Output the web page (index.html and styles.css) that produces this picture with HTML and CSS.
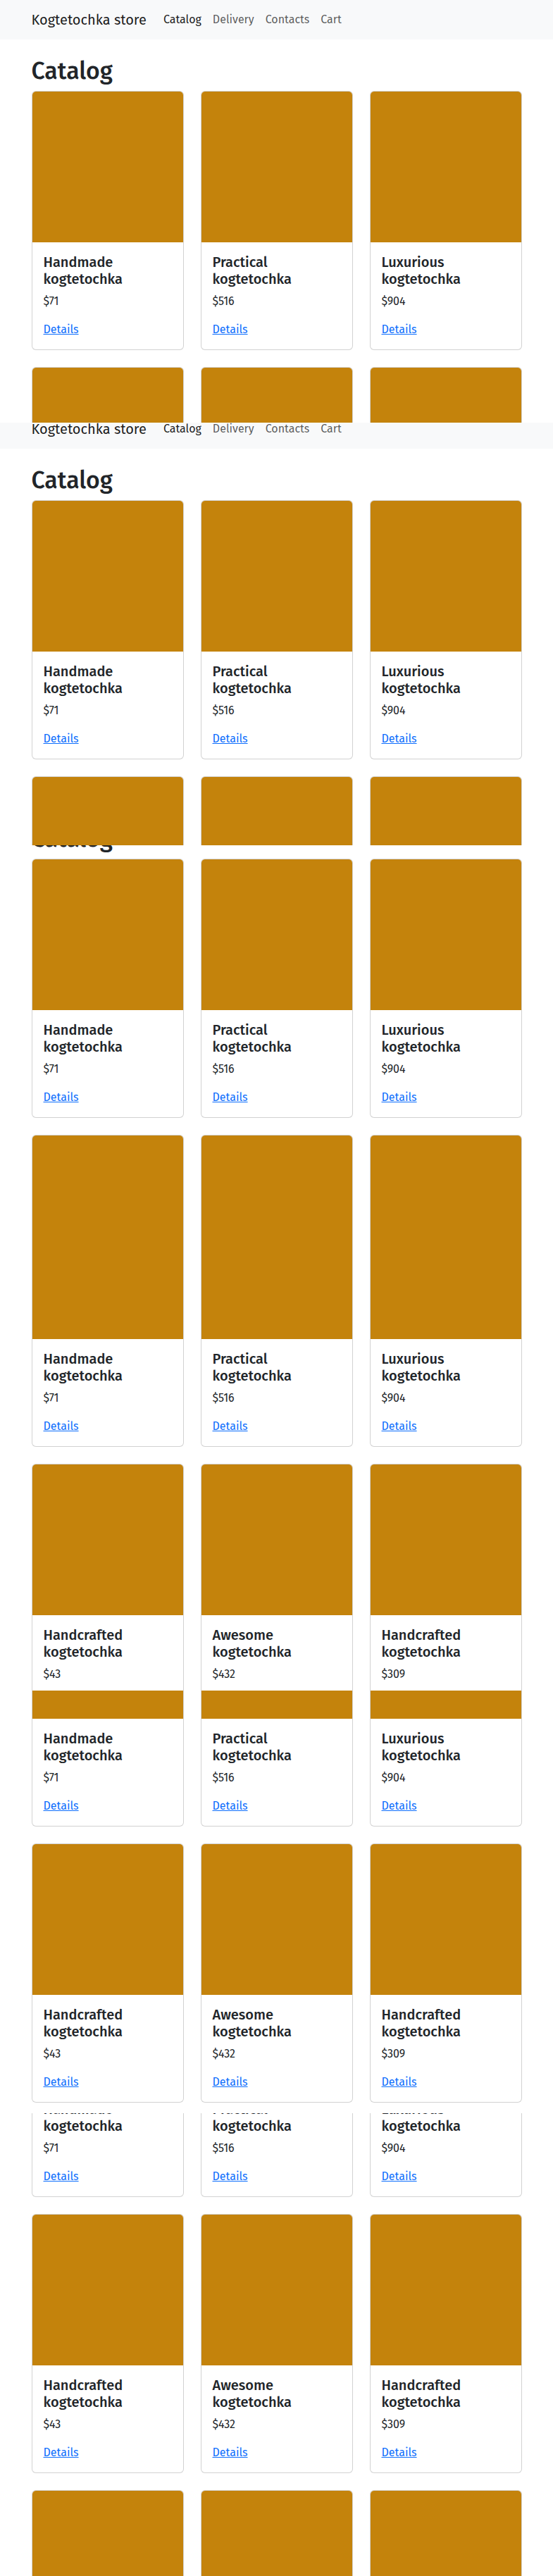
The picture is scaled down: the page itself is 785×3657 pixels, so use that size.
FILE: index.html
```html
<!DOCTYPE html>
<html lang="en">
<head>
<meta charset="utf-8">
<title>Catalog — Kogtetochka store</title>
<link rel="stylesheet" href="styles.css">
</head>
<body>

<!-- capture 1 : page from top -->
<section class="strip">
  <div class="page">
    <nav class="navbar">
      <div class="container nav-inner">
        <a class="brand" href="#">Kogtetochka store</a>
        <ul class="nav-links">
          <li><a class="nav-link active" href="#">Catalog</a></li>
          <li><a class="nav-link" href="#">Delivery</a></li>
          <li><a class="nav-link" href="#">Contacts</a></li>
          <li><a class="nav-link" href="#">Cart</a></li>
        </ul>
      </div>
    </nav>
    <main class="container main">
      <h1 class="title">Catalog</h1>
      <div class="grid">
        <div class="card"><div class="card-img"></div><div class="card-body"><h5 class="card-title">Handmade kogtetochka</h5><p class="price">$71</p><a class="details" href="#">Details</a></div></div>
        <div class="card"><div class="card-img"></div><div class="card-body"><h5 class="card-title">Practical kogtetochka</h5><p class="price">$516</p><a class="details" href="#">Details</a></div></div>
        <div class="card"><div class="card-img"></div><div class="card-body"><h5 class="card-title">Luxurious kogtetochka</h5><p class="price">$904</p><a class="details" href="#">Details</a></div></div>
        <div class="card"><div class="card-img"></div></div>
        <div class="card"><div class="card-img"></div></div>
        <div class="card"><div class="card-img"></div></div>
      </div>
    </main>
  </div>
</section>

<!-- capture 2 -->
<section class="strip s2">
  <div class="page">
    <nav class="navbar">
      <div class="container nav-inner">
        <a class="brand" href="#">Kogtetochka store</a>
        <ul class="nav-links">
          <li><a class="nav-link active" href="#">Catalog</a></li>
          <li><a class="nav-link" href="#">Delivery</a></li>
          <li><a class="nav-link" href="#">Contacts</a></li>
          <li><a class="nav-link" href="#">Cart</a></li>
        </ul>
      </div>
    </nav>
    <main class="container main">
      <h1 class="title">Catalog</h1>
      <div class="grid">
        <div class="card"><div class="card-img"></div><div class="card-body"><h5 class="card-title">Handmade kogtetochka</h5><p class="price">$71</p><a class="details" href="#">Details</a></div></div>
        <div class="card"><div class="card-img"></div><div class="card-body"><h5 class="card-title">Practical kogtetochka</h5><p class="price">$516</p><a class="details" href="#">Details</a></div></div>
        <div class="card"><div class="card-img"></div><div class="card-body"><h5 class="card-title">Luxurious kogtetochka</h5><p class="price">$904</p><a class="details" href="#">Details</a></div></div>
        <div class="card"><div class="card-img"></div></div>
        <div class="card"><div class="card-img"></div></div>
        <div class="card"><div class="card-img"></div></div>
      </div>
    </main>
  </div>
</section>

<!-- capture 3 -->
<section class="strip s3">
  <div class="page">
    <main class="container main-cut">
      <h1 class="title">Catalog</h1>
      <div class="grid">
        <div class="card"><div class="card-img"></div><div class="card-body"><h5 class="card-title">Handmade kogtetochka</h5><p class="price">$71</p><a class="details" href="#">Details</a></div></div>
        <div class="card"><div class="card-img"></div><div class="card-body"><h5 class="card-title">Practical kogtetochka</h5><p class="price">$516</p><a class="details" href="#">Details</a></div></div>
        <div class="card"><div class="card-img"></div><div class="card-body"><h5 class="card-title">Luxurious kogtetochka</h5><p class="price">$904</p><a class="details" href="#">Details</a></div></div>
        <div class="card"><div class="card-img"></div></div>
        <div class="card"><div class="card-img"></div></div>
        <div class="card"><div class="card-img"></div></div>
      </div>
    </main>
  </div>
</section>

<!-- capture 4 -->
<section class="strip s4">
  <div class="page">
    <main class="container main-cut">
      <div class="grid">
        <div class="card"><div class="card-img"></div><div class="card-body"><h5 class="card-title">Handmade kogtetochka</h5><p class="price">$71</p><a class="details" href="#">Details</a></div></div>
        <div class="card"><div class="card-img"></div><div class="card-body"><h5 class="card-title">Practical kogtetochka</h5><p class="price">$516</p><a class="details" href="#">Details</a></div></div>
        <div class="card"><div class="card-img"></div><div class="card-body"><h5 class="card-title">Luxurious kogtetochka</h5><p class="price">$904</p><a class="details" href="#">Details</a></div></div>
        <div class="card"><div class="card-img"></div><div class="card-body"><h5 class="card-title">Handcrafted kogtetochka</h5><p class="price">$43</p></div></div>
        <div class="card"><div class="card-img"></div><div class="card-body"><h5 class="card-title">Awesome kogtetochka</h5><p class="price">$432</p></div></div>
        <div class="card"><div class="card-img"></div><div class="card-body"><h5 class="card-title">Handcrafted kogtetochka</h5><p class="price">$309</p></div></div>
      </div>
    </main>
  </div>
</section>

<!-- capture 5 -->
<section class="strip s5">
  <div class="page">
    <main class="container main-cut">
      <div class="grid">
        <div class="card"><div class="card-img"></div><div class="card-body"><h5 class="card-title">Handmade kogtetochka</h5><p class="price">$71</p><a class="details" href="#">Details</a></div></div>
        <div class="card"><div class="card-img"></div><div class="card-body"><h5 class="card-title">Practical kogtetochka</h5><p class="price">$516</p><a class="details" href="#">Details</a></div></div>
        <div class="card"><div class="card-img"></div><div class="card-body"><h5 class="card-title">Luxurious kogtetochka</h5><p class="price">$904</p><a class="details" href="#">Details</a></div></div>
        <div class="card"><div class="card-img"></div><div class="card-body"><h5 class="card-title">Handcrafted kogtetochka</h5><p class="price">$43</p><a class="details" href="#">Details</a></div></div>
        <div class="card"><div class="card-img"></div><div class="card-body"><h5 class="card-title">Awesome kogtetochka</h5><p class="price">$432</p><a class="details" href="#">Details</a></div></div>
        <div class="card"><div class="card-img"></div><div class="card-body"><h5 class="card-title">Handcrafted kogtetochka</h5><p class="price">$309</p><a class="details" href="#">Details</a></div></div>
      </div>
    </main>
  </div>
</section>

<!-- capture 6 -->
<section class="strip s6">
  <div class="page">
    <main class="container main-cut">
      <div class="grid">
        <div class="card"><div class="card-img"></div><div class="card-body"><h5 class="card-title">Handmade kogtetochka</h5><p class="price">$71</p><a class="details" href="#">Details</a></div></div>
        <div class="card"><div class="card-img"></div><div class="card-body"><h5 class="card-title">Practical kogtetochka</h5><p class="price">$516</p><a class="details" href="#">Details</a></div></div>
        <div class="card"><div class="card-img"></div><div class="card-body"><h5 class="card-title">Luxurious kogtetochka</h5><p class="price">$904</p><a class="details" href="#">Details</a></div></div>
        <div class="card"><div class="card-img"></div><div class="card-body"><h5 class="card-title">Handcrafted kogtetochka</h5><p class="price">$43</p><a class="details" href="#">Details</a></div></div>
        <div class="card"><div class="card-img"></div><div class="card-body"><h5 class="card-title">Awesome kogtetochka</h5><p class="price">$432</p><a class="details" href="#">Details</a></div></div>
        <div class="card"><div class="card-img"></div><div class="card-body"><h5 class="card-title">Handcrafted kogtetochka</h5><p class="price">$309</p><a class="details" href="#">Details</a></div></div>
        <div class="card"><div class="card-img"></div></div>
        <div class="card"><div class="card-img"></div></div>
        <div class="card"><div class="card-img"></div></div>
      </div>
    </main>
  </div>
</section>

</body>
</html>
```

FILE: styles.css
```css
* { box-sizing: border-box; }

html, body {
  margin: 0;
  padding: 0;
  background: #ffffff;
}

body {
  font-family: "Fira Sans", "Open Sans", "Noto Sans", sans-serif;
  font-size: 16px;
  line-height: 1.5;
  color: #212529;
}

/* each capture window of the stitched screenshot */
.strip {
  height: 600px;
  overflow: hidden;
  background: #ffffff;
}
.strip.s6 { height: 657px; }

.s2 .page { margin-top: -19px; }
.s3 .page { margin-top: -30px; }
.s4 .page { margin-top: -114px; }
.s5 .page { margin-top: -175px; }
.s6 .page { margin-top: -249px; }

.container {
  width: 100%;
  max-width: 720px;
  margin: 0 auto;
  padding: 0 12px;
}

/* navbar */
.navbar {
  background: #f8f9fa;
  padding: 8px 0;
}
.nav-inner {
  display: flex;
  align-items: center;
}
.brand {
  font-size: 20px;
  line-height: 30px;
  padding: 5px 0;
  margin-right: 16px;
  color: rgba(0, 0, 0, 0.9);
  text-decoration: none;
  white-space: nowrap;
}
.nav-links {
  display: flex;
  list-style: none;
  margin: 0;
  padding: 0;
}
.nav-link {
  display: block;
  padding: 8px 8px;
  line-height: 24px;
  color: rgba(0, 0, 0, 0.65);
  text-decoration: none;
}
.nav-link.active { color: rgba(0, 0, 0, 0.9); }

/* main */
.main { padding-top: 24px; }
.main-cut { padding-top: 0; }

.title {
  margin: 0 0 8px;
  font-size: 33.8px;
  line-height: 41px;
  font-weight: 500;
  color: #212529;
}

.grid {
  display: grid;
  grid-template-columns: repeat(3, 1fr);
  column-gap: 24px;
  row-gap: 24px;
}

.card {
  border: 1px solid rgba(0, 0, 0, 0.175);
  border-radius: 6px;
  overflow: hidden;
  background: #ffffff;
}
.card-img {
  aspect-ratio: 1 / 1;
  background: #c4830c;
}
.card-body {
  padding: 16px;
}
.card-title {
  margin: 0 0 8px;
  font-size: 20px;
  line-height: 24px;
  font-weight: 500;
  color: #212529;
}
.price {
  margin: 0 0 16px;
  line-height: 24px;
}
.details {
  display: inline-block;
  line-height: 24px;
  color: #0d6efd;
  text-decoration: underline;
}
```
